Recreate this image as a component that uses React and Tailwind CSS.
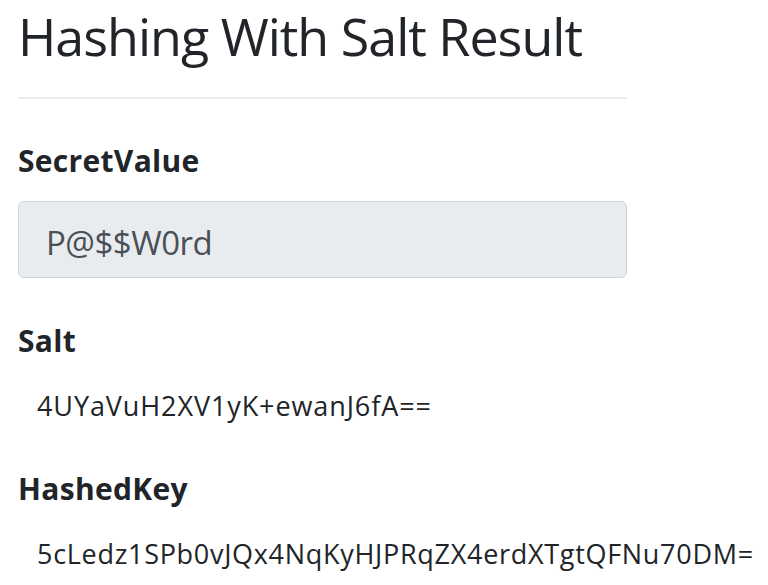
import React from 'react';

const FIELDS = [
  { label: 'Salt', value: '4UYaVuH2XV1yK+ewanJ6fA==', gap: 'mt-[45px]', track: 'tracking-[0.9px]' },
  { label: 'HashedKey', value: '5cLedz1SPb0vJQx4NqKyHJPRqZX4erdXTgtQFNu70DM=', gap: 'mt-[50px]', track: 'tracking-[0.7px]' },
];

export default function App() {
  return (
    <div
      className="min-h-screen bg-white px-[18px] text-[#212529]"
      style={{ fontFamily: '"Open Sans", "Noto Sans", Arial, sans-serif' }}
    >
      <h1 className="text-[52px] leading-[72px] font-medium tracking-[-1px]">Hashing With Salt Result</h1>
      <div className="mt-[25px] h-[2px] w-[609px] bg-[#ebebeb]" />

      <label className="mt-[44px] block text-[30px] leading-[35px] font-bold tracking-[0.3px]">SecretValue</label>
      <div className="mt-[23px] h-[77px] w-[609px] rounded-[6px] border border-[#ced4da] bg-[#e9ecef] px-[27px] pt-[6px] text-[33px] leading-[69px] tracking-[-0.5px] text-[#495057]">
        P@$$W0rd
      </div>

      {FIELDS.map((f) => (
        <div key={f.label} className={f.gap}>
          <div className="text-[30px] leading-[35px] font-bold tracking-[0.3px]">{f.label}</div>
          <div className={`mt-[33px] pl-[19px] text-[27px] leading-[30px] whitespace-nowrap ${f.track}`}>{f.value}</div>
        </div>
      ))}
    </div>
  );
}
